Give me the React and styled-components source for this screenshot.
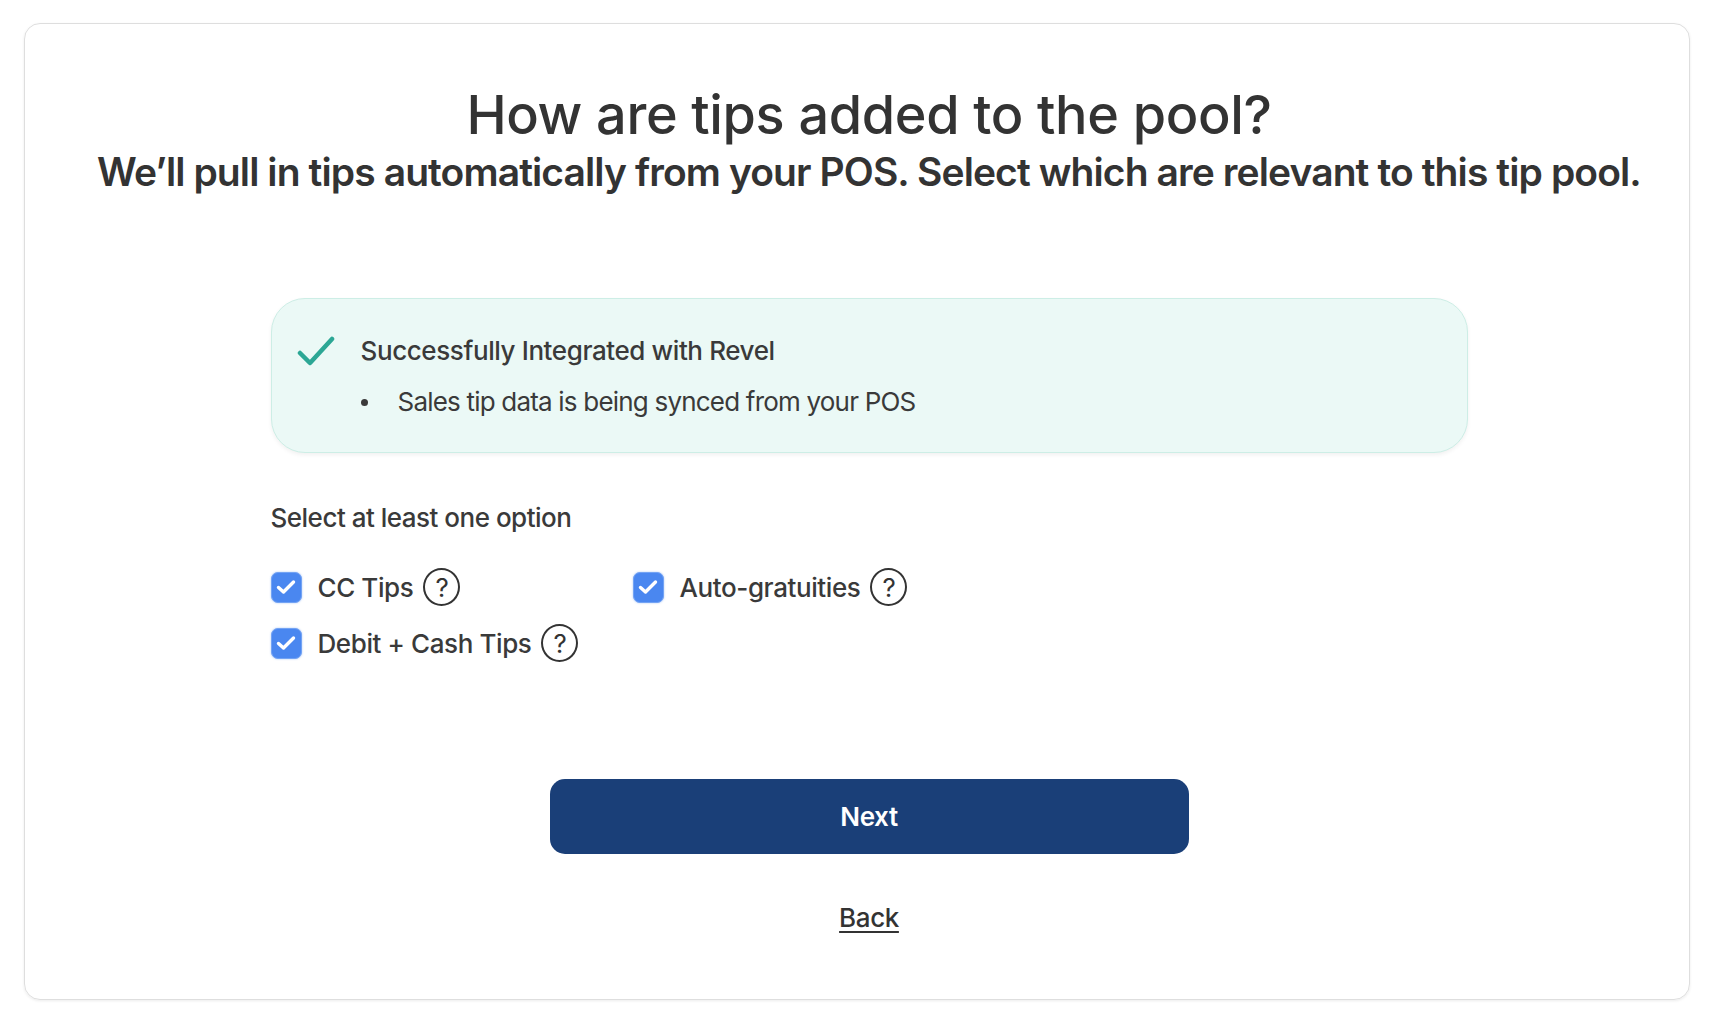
import styled, { createGlobalStyle } from "styled-components";

const GlobalStyle = createGlobalStyle`
  html, body {
    margin: 0;
    padding: 0;
    background: #ffffff;
  }
  body {
    font-family: Inter, "Noto Sans", "Liberation Sans", sans-serif;
    color: #333333;
  }
  * {
    box-sizing: border-box;
  }
`;

const Page = styled.div`
  height: 1024px;
  padding: 23px 24px 24px;
`;

const Card = styled.div`
  height: 100%;
  border: 1px solid #dedede;
  border-radius: 16px;
  box-shadow: 0 1px 3px rgba(0, 0, 0, 0.08);
  padding: 61px 24px 0 48px;
  display: flex;
  flex-direction: column;
  align-items: center;
`;

const Title = styled.h1`
  margin: 0;
  font-size: 54px;
  line-height: 60px;
  font-weight: 500;
  letter-spacing: -0.35px;
  color: #333;
  text-align: center;
`;

const Subtitle = styled.h2`
  margin: 3px 0 0;
  font-size: 39px;
  line-height: 48px;
  font-weight: 600;
  letter-spacing: -0.9px;
  color: #333;
  text-align: center;
  white-space: nowrap;
`;

const Content = styled.div`
  width: 1197px;
  margin-top: 102px;
  display: flex;
  flex-direction: column;
`;

const SuccessBox = styled.div`
  display: grid;
  grid-template-columns: 38px 1fr;
  column-gap: 26px;
  row-gap: 19px;
  align-items: center;
  padding: 36px 25px 34px;
  background: #ebf9f6;
  border: 1px solid #cdeee6;
  border-radius: 34px;
  box-shadow: 0 2px 4px rgba(0, 0, 0, 0.06);
`;

const SuccessTitle = styled.div`
  font-size: 26px;
  line-height: 32px;
  font-weight: 500;
  letter-spacing: -0.4px;
  color: #3a3a3a;
`;

const Bullet = styled.div`
  grid-column: 2;
  display: flex;
  align-items: center;
  gap: 30px;
  font-size: 26px;
  line-height: 32px;
  font-weight: 400;
  letter-spacing: -0.8px;
  color: #3a3a3a;
  &::before {
    content: "";
    width: 7px;
    height: 7px;
    border-radius: 50%;
    background: #3a3a3a;
  }
`;

const Label = styled.div`
  margin-top: 50px;
  font-size: 26px;
  line-height: 30px;
  font-weight: 500;
  letter-spacing: -0.5px;
  color: #3a3a3a;
`;

const Options = styled.div`
  margin-top: 35px;
  display: grid;
  grid-template-columns: 362px auto;
  row-gap: 18px;
  justify-content: start;
`;

const Option = styled.label`
  display: flex;
  align-items: center;
  height: 38px;
  font-size: 26px;
  font-weight: 500;
  letter-spacing: -0.4px;
  color: #3a3a3a;
  cursor: pointer;
`;

const Box = styled.span`
  width: 31px;
  height: 31px;
  border-radius: 7px;
  background: ${(p) => (p.checked ? "#4a87f0" : "#fff")};
  border: 1px solid ${(p) => (p.checked ? "#73a3f4" : "#999")};
  box-shadow: ${(p) => (p.checked ? "0 0 2px rgba(74, 135, 240, 0.5)" : "none")};
  display: flex;
  align-items: center;
  justify-content: center;
  margin-right: 16px;
  flex-shrink: 0;
`;

const Help = styled.span`
  width: 37px;
  height: 38px;
  margin-left: 10px;
  border: 2px solid #333;
  border-radius: 50%;
  display: flex;
  align-items: center;
  justify-content: center;
  font-size: 26px;
  font-weight: 400;
  color: #333;
`;

const Footer = styled.div`
  margin-top: 117px;
  display: flex;
  flex-direction: column;
  align-items: center;
`;

const NextButton = styled.button`
  width: 639px;
  height: 75px;
  border: none;
  border-radius: 15px;
  background: #1a3f78;
  color: #fff;
  font-family: inherit;
  font-size: 26px;
  font-weight: 600;
  letter-spacing: -0.4px;
  cursor: pointer;
`;

const BackLink = styled.a`
  margin-top: 48px;
  font-size: 26px;
  line-height: 32px;
  font-weight: 500;
  letter-spacing: -0.4px;
  color: #333;
  text-decoration: underline;
  text-underline-offset: 4px;
  text-decoration-thickness: 2px;
  cursor: pointer;
`;

const CheckMark = () => (
  <svg width="38" height="30" viewBox="0 0 38 30" fill="none">
    <path
      d="M3 17 L13 27 L35 3"
      stroke="#2ca795"
      strokeWidth="4.5"
      strokeLinecap="round"
      strokeLinejoin="round"
    />
  </svg>
);

const BoxTick = () => (
  <svg width="20" height="16" viewBox="0 0 20 16" fill="none">
    <path
      d="M2.5 8.5 L7.5 13 L17.5 3"
      stroke="#fff"
      strokeWidth="3.4"
      strokeLinecap="round"
      strokeLinejoin="round"
    />
  </svg>
);

const options = [
  { label: "CC Tips", checked: true },
  { label: "Auto-gratuities", checked: true },
  { label: "Debit + Cash Tips", checked: true },
];

const App = () => {
  return (
    <Page>
      <GlobalStyle />
      <Card>
        <Title>How are tips added to the pool?</Title>
        <Subtitle>
          We’ll pull in tips automatically from your POS. Select which are relevant to this tip pool.
        </Subtitle>
        <Content>
          <SuccessBox>
            <CheckMark />
            <SuccessTitle>Successfully Integrated with Revel</SuccessTitle>
            <Bullet>Sales tip data is being synced from your POS</Bullet>
          </SuccessBox>
          <Label>Select at least one option</Label>
          <Options>
            {options.map((o) => (
              <Option key={o.label}>
                <Box checked={o.checked}>{o.checked && <BoxTick />}</Box>
                {o.label}
                <Help>?</Help>
              </Option>
            ))}
          </Options>
        </Content>
        <Footer>
          <NextButton>Next</NextButton>
          <BackLink>Back</BackLink>
        </Footer>
      </Card>
    </Page>
  );
};

export default App;
